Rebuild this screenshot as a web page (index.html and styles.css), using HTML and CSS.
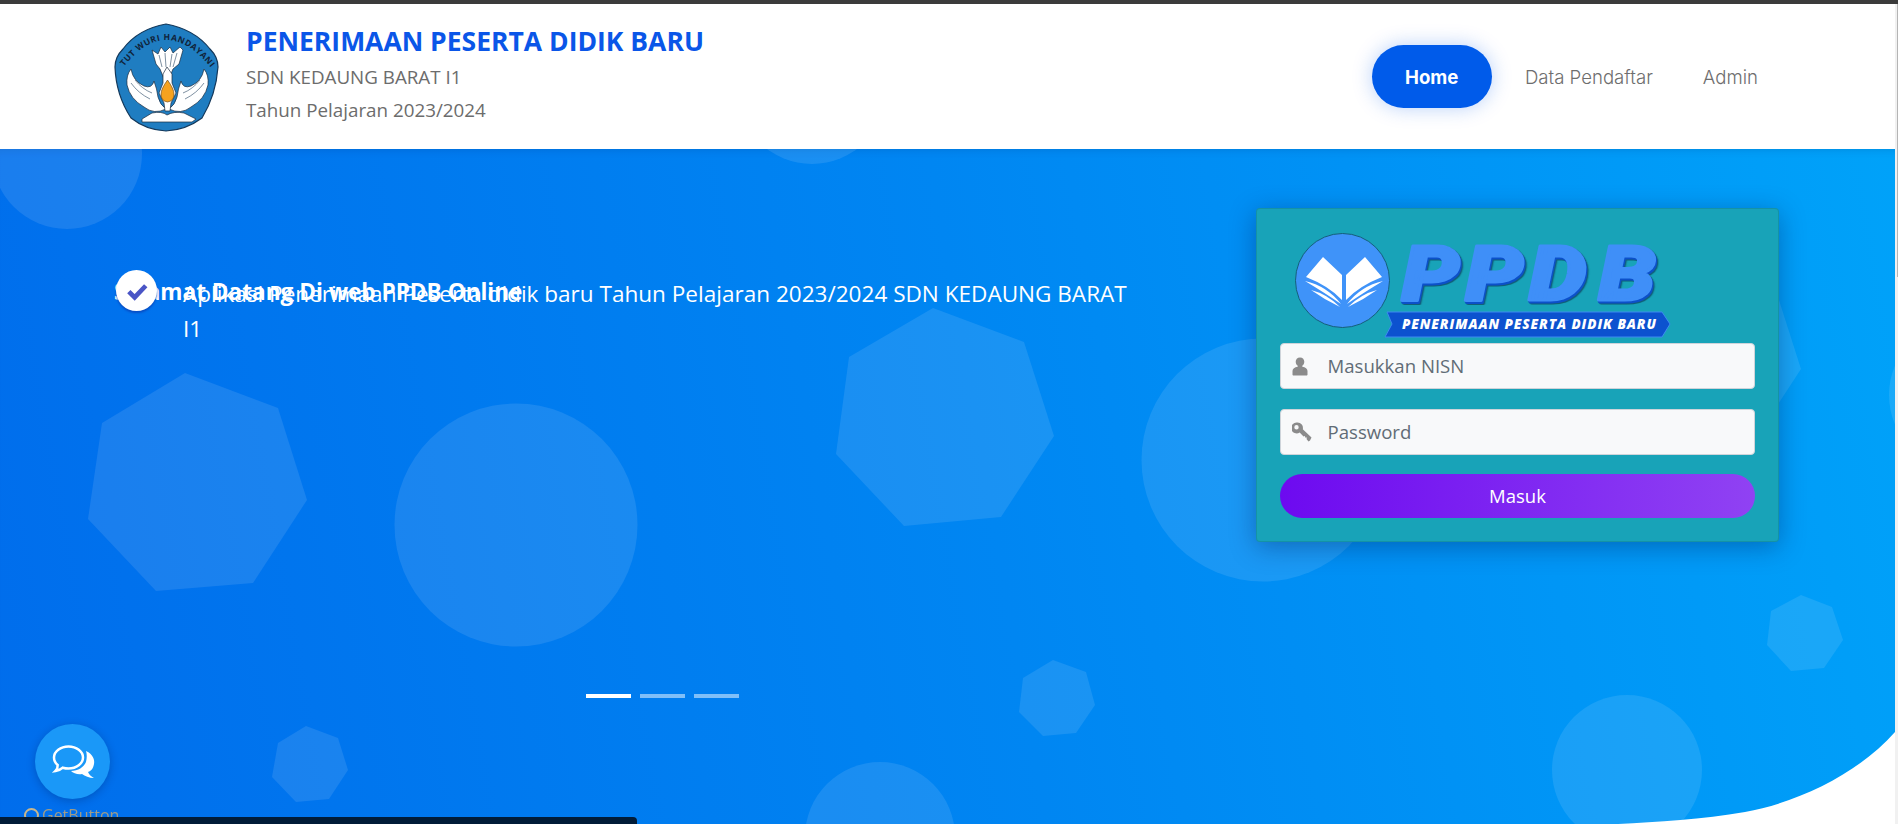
FILE: index.html
```html
<!DOCTYPE html>
<html lang="id">
<head>
<meta charset="utf-8">
<title>PPDB</title>
<link rel="stylesheet" href="styles.css">
</head>
<body>
<div class="window-edge"></div>
<div class="viewport">
  <div class="page">
    <header class="header">
      <a class="brand">
        <svg class="emblem" viewBox="0 0 105 109" aria-hidden="true">
          <path class="emblem-shield" d="M52 1Q80 6 96 26Q104 34 104 44Q102 72 88 95Q72 107 52 108Q32 107 17 95Q2 72 1 44Q1 34 9 26Q24 6 52 1Z"/>
          <path id="arc" class="none" d="M8 46Q52 -12 98 46"/>
          <text class="emblem-text"><textPath href="#arc" textLength="106" startOffset="3">TUT WURI HANDAYANI</textPath></text>
          <path class="emblem-white" d="M38 27L44 31L47 24L51 29L56 24L59 30L66 24L69 27L65 41L59 46L55 56L50 56L46 46L42 41Z"/>
          <path class="emblem-line" d="M45 32L48 44M51 30L52 44M58 31L56 44M63 30L59 44"/>
          <path class="emblem-white" d="M17 46Q19 58 30 63Q38 66 40 58Q43 66 44 74Q46 82 52 86Q40 92 30 84Q16 76 13 62Q12 52 17 46Z"/>
          <path class="emblem-white" d="M90 46Q88 58 77 63Q69 66 67 58Q64 66 63 74Q61 82 55 86Q67 92 77 84Q91 76 94 62Q95 52 90 46Z"/>
          <path class="emblem-line" d="M17 60Q24 70 36 76M21 57Q28 66 38 70M90 60Q83 70 71 76M86 57Q79 66 69 70"/>
          <path class="emblem-white" d="M53 44L58 51L58 60L62 70L57 80L56 88L51 88L50 80L45 70L49 60L49 51Z"/>
          <path class="emblem-flame" d="M53.500 57Q60 66 60 71Q60 78 53.500 79Q47 78 47 71Q47 66 53.500 57Z"/>
          <path class="emblem-white" d="M28 96L38 90Q48 88 53 92Q60 88 70 90L82 96L78 99L28 99Z"/>
        </svg>
        <div class="brand-text">
          <h1 class="brand-title">PENERIMAAN PESERTA DIDIK BARU</h1>
          <p class="brand-line">SDN KEDAUNG BARAT I1</p>
          <p class="brand-line">Tahun Pelajaran 2023/2024</p>
        </div>
      </a>
      <nav class="nav">
        <a class="nav-home">Home</a>
        <a class="nav-link">Data Pendaftar</a>
        <a class="nav-link">Admin</a>
      </nav>
    </header>

    <main class="hero">
      <svg class="hero-art" viewBox="0 149 1895 675" aria-hidden="true">
        <g class="bubbles">
          <circle cx="67" cy="154" r="75"/>
          <circle cx="812" cy="89" r="75"/>
          <circle cx="516" cy="525" r="121.500"/>
          <circle cx="1263" cy="460" r="121.500"/>
          <circle cx="880" cy="837" r="75"/>
          <circle cx="1627" cy="770" r="75"/>
          <circle cx="1964" cy="395" r="75"/>
          <polygon points="185,373 278,408 307,500 253,583 156,591 88,519 102,423"/>
          <polygon points="933,308 1024,342 1054,436 1001,517 904,526 836,454 849,357"/>
          <polygon points="1053,660 1086,672 1095,705 1076,733 1043,736 1019,712 1023,678"/>
          <polygon points="306,726 338,738 348,770 329,799 296,802 272,777 278,743"/>
          <polygon points="1801,595 1832,607 1843,640 1824,668 1791,671 1767,645 1771,611"/>
          <polygon points="1680,241 1771,275 1801,369 1748,450 1651,459 1583,387 1596,290"/>
        </g>
        <path class="hero-curve" d="M1610 824.500C1650 822 1700 820 1745 812C1800 802 1860 772 1895 732L1895 825Z"/>
      </svg>

      <section class="carousel">
        <div class="slide">
          <span class="check">
            <svg viewBox="0 0 24 24" aria-hidden="true"><path d="M5 12.500L10 17.500L19.500 7.500" /></svg>
          </span>
          <h2 class="slide-title">Selamat Datang Di web PPDB Online</h2>
          <p class="slide-text">Aplikasi Penerimaan Peserta didik baru Tahun Pelajaran 2023/2024 SDN KEDAUNG BARAT I1</p>
        </div>
        <div class="dots">
          <span class="dot dot-active"></span>
          <span class="dot"></span>
          <span class="dot"></span>
        </div>
      </section>

      <form class="login">
        <svg class="login-logo" viewBox="0 0 390 105" role="img" aria-label="PPDB">
          <circle class="logo-disc" cx="47.500" cy="47.500" r="47"/>
          <g class="logo-book">
            <path d="M28 24L47 42L47 67Q34 53 11 44Z"/>
            <path d="M70 24L51 42L51 67Q64 53 87 44Z"/>
            <path d="M10 48Q32 53 46 71Q30 60 10 48Z"/>
            <path d="M88 48Q66 53 52 71Q68 60 88 48Z"/>
            <path d="M16 57Q32 61 45 74Q30 67 16 57Z"/>
            <path d="M82 57Q66 61 53 74Q68 67 82 57Z"/>
          </g>
          <text class="logo-word" x="89 142 195 253" y="67">PPDB</text>
          <path class="logo-ribbon" d="M92 79L367 79L375 91L367 104L90 104L97 91Z"/>
          <text class="logo-ribbon-text" x="107" y="96" textLength="254">PENERIMAAN PESERTA DIDIK BARU</text>
        </svg>
        <label class="field">
          <svg class="field-icon" viewBox="2 0 20 20" aria-hidden="true"><path d="M10 1.500C12.800 1.500 14.300 3.500 14.300 5.800C14.300 7.600 13.400 9 12.300 9.800L12.300 10.800C15.500 11.300 17.500 12.800 17.500 15V18.500C17.500 19.200 17 19.500 16.500 19.500H3.500C3 19.500 2.500 19.200 2.500 18.500V15C2.500 12.800 4.500 11.300 7.700 10.800L7.700 9.800C6.600 9 5.700 7.600 5.700 5.800C5.700 3.500 7.200 1.500 10 1.500Z"/></svg>
          <span class="field-text">Masukkan NISN</span>
        </label>
        <label class="field">
          <svg class="field-icon" viewBox="0 0 20 20" aria-hidden="true"><path fill-rule="evenodd" d="M5.500 0.500A5.500 5.500 0 0 1 10.800 7.300L19.500 15.500L18 18.500L16.500 19.500L14.500 17L15 15.500L13.500 15.800L12.800 14L11.500 14.500L7.700 10.500A5.500 5.500 0 1 1 5.500 0.500ZM4.500 3A2.200 2.200 0 1 0 4.500 7.400A2.200 2.200 0 1 0 4.500 3Z"/></svg>
          <span class="field-text">Password</span>
        </label>
        <button class="submit" type="button">Masuk</button>
      </form>
    </main>
  </div>
  <div class="scrollbar"><div class="scrollbar-thumb"></div></div>
</div>

<a class="chat">
  <svg class="chat-icon" viewBox="0 0 42 33" aria-hidden="true">
    <path class="chat-outline" d="M16.500 1.500C24.500 1.500 31 6.500 31 12.500C31 18.500 24.500 23.500 16.500 23.500C14.500 23.500 12.500 23.200 10.800 22.700C9 24.500 6.500 25.500 3.500 26C5 24.500 5.800 22.500 5.700 20C3.200 18 2 15.500 2 12.500C2 6.500 8.500 1.500 16.500 1.500Z"/>
    <path class="chat-fill" d="M34 6C41 9 43 15 42 19C41 24 39 26 36 27C37 30 40 32 42 33C37 33 33 31 30 29C26 30 21 28 19 26C26 26 32 22 34 17C35 13 35 9 34 6Z"/>
  </svg>
</a>
<span class="getbutton"><span class="getbutton-mark"></span>GetButton</span>
<div class="status-bar"></div>
</body>
</html>
```

FILE: styles.css
```css
* { box-sizing: border-box; }
html, body { margin: 0; height: 824px; overflow: hidden; background: #fff; }
body { font-family: "Open Sans", "Noto Sans", sans-serif; position: relative; }

.window-edge { height: 4px; background: #3b3b3b; }
.viewport { display: flex; height: 820px; }
.page { flex: 1; display: flex; flex-direction: column; min-width: 0; }
.scrollbar { width: 3px; background: #f1f1f1; padding-left: 1.500px; }
.scrollbar-thumb { height: 273px; background: #b4b4b4; }

/* Header */
.header {
  height: 145px;
  flex: none;
  background: #fff;
  display: flex;
  align-items: center;
  justify-content: space-between;
  padding: 0 112px 0 114px;
}
.brand { display: flex; align-items: center; gap: 27px; }
.brand-text { padding-bottom: 4px; }
.emblem { width: 105px; height: 109px; display: block; margin-top: 2px; }
.emblem-shield { fill: #1f7dc1; stroke: #14385a; stroke-width: 1.200; }
.none { fill: none; }
.emblem-text { font: 700 8.500px "Open Sans", sans-serif; fill: #10233a; }
.emblem-white { fill: #fff; stroke: #1b2b3d; stroke-width: .7; }
.emblem-line { fill: none; stroke: #5d7489; stroke-width: .8; }
.emblem-flame { fill: #f5a21f; stroke: #5a3a10; stroke-width: .6; }

.brand-title {
  margin: 0 0 2px;
  font-size: 26.500px;
  line-height: 36px;
  font-weight: 700;
  color: #0a56e8;
  white-space: nowrap;
}
.brand-line { margin: 0; font-size: 18.800px; line-height: 33px; color: #6c6c6c; white-space: nowrap; }

.nav { display: flex; align-items: center; font-family: Inter, sans-serif; font-size: 18.600px; }
.nav-home {
  height: 63px;
  padding: 0 33.500px;
  margin-right: 8px;
  display: flex;
  align-items: center;
  border-radius: 32px;
  background: #005bea;
  color: #fff;
  font-weight: 700;
  box-shadow: 0 0 20px rgba(0, 91, 234, .28);
}
.nav-link { padding: 0 25px; color: #6e6e6e; font-weight: 300; white-space: nowrap; }

/* Hero */
.hero {
  flex: 1;
  position: relative;
  overflow: hidden;
  display: flex;
  background: linear-gradient(80deg, #006dec 0%, #0086f2 52%, #00a2f9 100%);
  box-shadow: inset 0 8px 8px -8px rgba(0, 40, 110, .22);
}
.hero-art { position: absolute; inset: 0; width: 100%; height: 100%; display: block; }
.bubbles circle, .bubbles polygon { fill: rgba(255, 255, 255, .1); }
.hero-curve { fill: #fff; }

.carousel {
  position: relative;
  flex: 1;
  min-width: 0;
  padding: 127px 0 0 183px;
}
.slide { position: relative; width: 960px; }
.slide-text { margin: 0; font-size: 22.550px; line-height: 35px; color: #fff; }
.slide-title {
  position: absolute;
  left: -69px;
  top: -2px;
  margin: 0;
  font-size: 22.600px;
  line-height: 35px;
  font-weight: 700;
  color: #fff;
  white-space: nowrap;
}
.check {
  position: absolute;
  z-index: 1;
  left: -67px;
  top: -6px;
  width: 41px;
  height: 41px;
  border-radius: 50%;
  background: #fff;
  box-shadow: 0 2px 2px rgba(8, 72, 190, .85);
  display: flex;
  align-items: center;
  justify-content: center;
}
.check svg { width: 28px; height: 28px; fill: none; stroke: #4a55c6; stroke-width: 4; filter: blur(.6px); }

.dots {
  position: absolute;
  left: 69px;
  right: 0;
  bottom: 126px;
  display: flex;
  justify-content: center;
  gap: 9px;
}
.dot { width: 45px; height: 4px; background: rgba(255, 255, 255, .5); }
.dot-active { background: #fff; }

/* Login card */
.login {
  position: relative;
  flex: none;
  width: 523px;
  height: 334px;
  margin: 59px 116px 0 0;
  padding: 24px 23px 23px;
  background: #18a3b8;
  border: 1px solid rgba(0, 0, 0, .1);
  border-radius: 4px;
  box-shadow: 0 5px 26px rgba(0, 30, 90, .38);
}
.login-logo { display: block; width: 390px; height: 105px; margin: 0 0 5px 15px; overflow: visible; }
.logo-disc { fill: #3f93f9; stroke: #146079; stroke-width: 1; }
.logo-book path { fill: #fff; }
.logo-word {
  font-family: Roboto, Inter, sans-serif;
  font-size: 76px;
  font-weight: 900;
  font-style: italic;
  fill: #3f8ff8;
  stroke: #3f8ff8;
  stroke-width: 3px;
  stroke-linejoin: round;
  transform: scaleX(1.2);
  filter: drop-shadow(1.500px 2px 0 #0c50c9) drop-shadow(1px 1px 0 #116078);
}
.logo-ribbon { fill: #0c52cf; stroke: #3c8af0; stroke-width: 1; }
.logo-ribbon-text {
  font-family: "Open Sans", sans-serif;
  font-size: 13.500px;
  font-weight: 800;
  font-style: italic;
  fill: #fff;
}

.field {
  height: 46px;
  margin-bottom: 20px;
  display: flex;
  align-items: center;
  padding-left: 11px;
  background: #f8f9fa;
  border: 1px solid #ced4da;
  border-radius: 4px;
}
.field-icon { width: 20px; height: 20px; flex: none; fill: #8b8b8b; }
.field-text { margin: 0 0 2px 15.500px; font-size: 18.600px; color: #616c76; }

.submit {
  display: block;
  width: 100%;
  height: 44px;
  margin-top: -1px;
  padding: 0 0 2px;
  border: 0;
  border-radius: 22px;
  background: linear-gradient(90deg, #6d0af0 0%, #9042f3 100%);
  color: #fff;
  font: 18.500px "Open Sans", sans-serif;
}

/* Floating widgets */
.chat {
  position: fixed;
  left: 35px;
  top: 724px;
  width: 75px;
  height: 75px;
  border-radius: 50%;
  background: #1a98f8;
  box-shadow: 0 2px 8px rgba(0, 30, 90, .3);
  display: flex;
  align-items: center;
  justify-content: center;
}
.chat-icon { width: 42px; height: 33px; overflow: visible; }
.chat-outline { fill: none; stroke: #fff; stroke-width: 2.500; }
.chat-fill { fill: #fff; }
.getbutton {
  position: fixed;
  left: 24px;
  top: 806px;
  display: flex;
  align-items: center;
  gap: 3px;
  font: 16px "Open Sans", sans-serif;
  line-height: 18px;
  color: #a09c86;
}
.getbutton-mark {
  width: 15px;
  height: 15px;
  border: 2px solid #c9b68a;
  border-radius: 50%;
}
.status-bar {
  position: fixed;
  left: 0;
  bottom: 0;
  width: 637px;
  height: 7px;
  background: #011c38;
  border-top-right-radius: 4px;
}
```
